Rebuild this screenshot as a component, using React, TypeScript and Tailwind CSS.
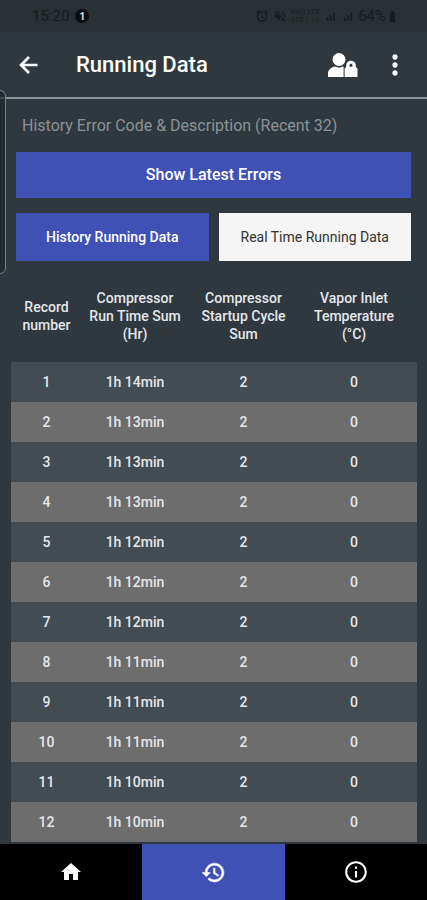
import {
  MdAlarm,
  MdBatteryFull,
  MdHome,
  MdInfoOutline,
  MdMoreVert,
  MdSignalCellularAlt,
  MdVolumeOff,
} from "react-icons/md";

interface RunningRecord {
  id: number;
  runTime: string;
  startupCycles: number;
  vaporInlet: number;
}

const records: RunningRecord[] = [
  { id: 1, runTime: "1h 14min", startupCycles: 2, vaporInlet: 0 },
  { id: 2, runTime: "1h 13min", startupCycles: 2, vaporInlet: 0 },
  { id: 3, runTime: "1h 13min", startupCycles: 2, vaporInlet: 0 },
  { id: 4, runTime: "1h 13min", startupCycles: 2, vaporInlet: 0 },
  { id: 5, runTime: "1h 12min", startupCycles: 2, vaporInlet: 0 },
  { id: 6, runTime: "1h 12min", startupCycles: 2, vaporInlet: 0 },
  { id: 7, runTime: "1h 12min", startupCycles: 2, vaporInlet: 0 },
  { id: 8, runTime: "1h 11min", startupCycles: 2, vaporInlet: 0 },
  { id: 9, runTime: "1h 11min", startupCycles: 2, vaporInlet: 0 },
  { id: 10, runTime: "1h 11min", startupCycles: 2, vaporInlet: 0 },
  { id: 11, runTime: "1h 10min", startupCycles: 2, vaporInlet: 0 },
  { id: 12, runTime: "1h 10min", startupCycles: 2, vaporInlet: 0 },
];

function BackIcon() {
  return (
    <svg
      width="26"
      height="26"
      viewBox="0 0 26 26"
      fill="none"
      stroke="currentColor"
      strokeWidth="2.6"
      aria-hidden="true"
    >
      <path d="M21.500 13H6M13 5l-8 8 8 8" />
    </svg>
  );
}

function HistoryIcon() {
  return (
    <svg
      width="25"
      height="25"
      viewBox="0 0 24 24"
      fill="currentColor"
      stroke="currentColor"
      strokeWidth="0.5"
      aria-hidden="true"
    >
      <path d="M13 3c-4.970 0-9 4.030-9 9H1l3.890 3.890.07.14L9 12H6c0-3.870 3.130-7 7-7s7 3.130 7 7-3.130 7-7 7c-1.930 0-3.680-.790-4.940-2.060l-1.420 1.420C8.270 19.990 10.510 21 13 21c4.970 0 9-4.030 9-9s-4.030-9-9-9zm-1 5v5l4.280 2.540.720-1.210-3.500-2.080V8H12z" />
    </svg>
  );
}

function UserLockIcon() {
  return (
    <svg width="32" height="26" viewBox="0 0 32 26" fill="#fff" aria-hidden="true">
      <circle cx="12" cy="7.500" r="6.500" />
      <path d="M1 25v-3.500c0-4 3.500-6.500 7-7l4 1.200 4-1.200.6.200V25z" />
      <path d="M17.600 16.500l1.600-1.500v-1.500a4.800 4.800 0 0 1 9.600 0V15l1.700 1.500V25H17.600z" />
      <path d="M22.600 14.800v-1.600a1.400 1.400 0 0 1 2.800 0v1.600z" fill="#2f383f" />
    </svg>
  );
}

function StatusBar() {
  return (
    <div className="flex h-8 items-center justify-between bg-[#283033] pr-7 pl-8 text-[#151b1e]">
      <div className="flex items-center gap-1.5">
        <span className="text-[15px]">15:20</span>
        <span className="flex size-3.5 items-center justify-center rounded-full bg-[#0b0d0e] text-[10px] font-bold text-gray-200">
          1
        </span>
      </div>
      <div className="flex items-center gap-1">
        <MdAlarm size={14} />
        <MdVolumeOff size={14} />
        <div className="text-center text-[8px] leading-2">
          Vo)) LTE
          <br />
          LTE1 ↓↑
        </div>
        <MdSignalCellularAlt size={13} />
        <MdSignalCellularAlt size={13} />
        <div className="flex items-center">
          <span className="text-[15px]">64%</span>
          <MdBatteryFull size={13} />
        </div>
      </div>
    </div>
  );
}

function Header() {
  return (
    <header className="flex h-[67px] items-center border-b-2 border-[#8b9497] px-4">
      <button aria-label="Back">
        <BackIcon />
      </button>
      <h1 className="ml-[34px] flex-1 text-[22px] font-medium">Running Data</h1>
      <button aria-label="Account lock" className="mr-5">
        <UserLockIcon />
      </button>
      <button aria-label="More options">
        <MdMoreVert size={32} />
      </button>
    </header>
  );
}

function RecordsTable() {
  return (
    <table className="w-full table-fixed text-center text-sm font-medium text-gray-200">
      <thead>
        <tr className="h-[93px] leading-[18px]">
          <th className="w-[71px] font-medium">Record number</th>
          <th className="w-[106px] font-medium">
            Compressor
            <br />
            Run Time Sum
            <br />
            (Hr)
          </th>
          <th className="w-[111px] font-medium">
            Compressor
            <br />
            Startup Cycle
            <br />
            Sum
          </th>
          <th className="pr-2 font-medium">
            Vapor Inlet
            <br />
            Temperature
            <br />
            (°C)
          </th>
        </tr>
      </thead>
      <tbody>
        {records.map((record) => (
          <tr key={record.id} className="h-10 odd:bg-[#434c53] even:bg-[#6d6d6d]">
            <td>{record.id}</td>
            <td>{record.runTime}</td>
            <td>{record.startupCycles}</td>
            <td className="pr-2">{record.vaporInlet}</td>
          </tr>
        ))}
      </tbody>
    </table>
  );
}

function BottomNav() {
  return (
    <nav className="sticky bottom-0 grid h-14 grid-cols-3 bg-black">
      <a href="#home" aria-label="Home" className="flex items-center justify-center">
        <MdHome size={24} />
      </a>
      <a
        href="#history"
        aria-label="History"
        aria-current="page"
        className="flex items-center justify-center bg-[#3f51b5]"
      >
        <HistoryIcon />
      </a>
      <a href="#info" aria-label="Info" className="flex items-center justify-center">
        <MdInfoOutline size={26} />
      </a>
    </nav>
  );
}

export default function App() {
  return (
    <div className="relative flex min-h-screen flex-col overflow-x-clip bg-[#2f383f] font-[Roboto,sans-serif] text-white">
      <StatusBar />
      <Header />

      {/* Edge panel handle */}
      <div className="absolute top-[90px] -left-2 h-[184px] w-3.5 rounded-md border border-[#7c8385] bg-[#20272a]/70" />

      <main className="flex-1">
        <div className="px-4 pt-4">
          <h2 className="pl-1.5 text-base leading-[22px] text-[#8c9294]">
            History Error Code &amp; Description (Recent 32)
          </h2>
          <button className="mt-[15px] h-[46px] w-full bg-[#3f51b5] text-base font-medium">
            Show Latest Errors
          </button>
          <div className="mt-[15px] grid grid-cols-2 gap-2.5 text-sm">
            <button className="h-12 bg-[#3f51b5] font-medium">History Running Data</button>
            <button className="h-12 bg-[#f5f5f5] text-[#333]">Real Time Running Data</button>
          </div>
        </div>

        <div className="mt-2 pr-2.5 pl-[11px]">
          <RecordsTable />
        </div>
      </main>

      <BottomNav />
    </div>
  );
}
